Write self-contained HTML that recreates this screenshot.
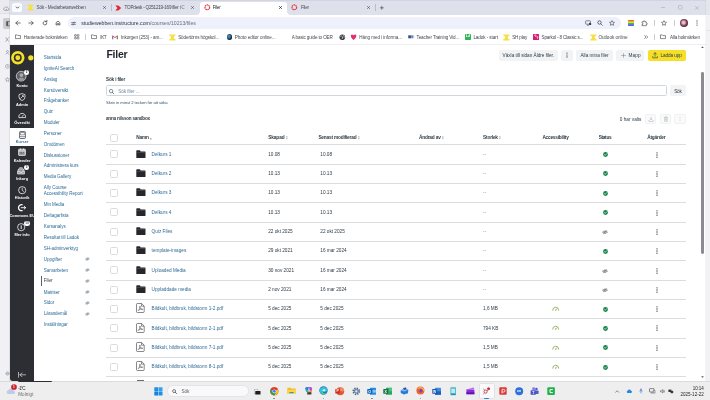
<!DOCTYPE html>
<html lang="sv"><head><meta charset="utf-8"><title>Filer</title>
<style>
*{box-sizing:border-box;margin:0;padding:0}
html,body{width:710px;height:400px;overflow:hidden;background:#eeeeef;font-family:"Liberation Sans",sans-serif;}
#root{position:absolute;left:0;top:0;width:710px;height:400px;overflow:hidden;will-change:transform;filter:blur(0.4px)}
.a{position:absolute;white-space:nowrap;line-height:1;display:block}
svg.a{overflow:visible}
</style></head><body><div id="root">
<!-- nav -->
<div class="a" style="left:0px;top:0px;width:10.4px;height:381px;background:#f1f0f4;"></div>
<div class="a" style="left:0px;top:0px;width:10.4px;height:13.4px;background:#ebebef;"></div>
<div class="a" style="left:0px;top:13px;width:10.4px;height:0.6px;background:#dfdfe3;"></div>
<svg class="a" style="left:3.2px;top:5.8px;" width="6.4" height="5" viewBox="0 0 6.4 5"><path d="M1.5 4.4 A1.3 1.3 0 0 1 1.7 1.9 A1.9 1.9 0 0 1 5.2 2.3 A1.1 1.1 0 0 1 5.2 4.4Z" fill="none" stroke="#77787d" stroke-width="0.55"/><circle cx="3.3" cy="3.2" r="0.5" fill="#77787d"/></svg>
<div class="a" style="left:2.8px;top:18px;width:8.2px;height:10.8px;background:#cdcdd0;border-radius:2px;"></div>
<svg class="a" style="left:5.5px;top:20.7px;" width="5" height="5.4" viewBox="0 0 5 5.4"><rect x="0.4" y="0.5" width="4.6" height="4.4" rx="0.6" fill="none" stroke="#55565b" stroke-width="0.6"/><rect x="0.4" y="0.5" width="1.8" height="4.4" fill="#55565b"/></svg>
<svg class="a" style="left:5.4px;top:36.7px;" width="4.4" height="5" viewBox="0 0 4.4 5"><path d="M0.8 0.6 L3.6 4.4 M3.6 0.6 L0.8 4.4" stroke="#77787d" stroke-width="0.55" stroke-linecap="round"/></svg>
<svg class="a" style="left:5.2px;top:50px;" width="4.8" height="4.8" viewBox="0 0 4.8 4.8"><circle cx="2.4" cy="1.5" r="1" fill="none" stroke="#77787d" stroke-width="0.5"/><path d="M0.6 4.4 Q2.4 1.8 4.2 4.4" fill="none" stroke="#77787d" stroke-width="0.5"/></svg>
<svg class="a" style="left:5.4px;top:63.6px;" width="4.8" height="4.8" viewBox="0 0 4.8 4.8"><circle cx="2.4" cy="2.4" r="1.9" fill="none" stroke="#77787d" stroke-width="0.5"/><path d="M2.4 1.3 V2.5 L3.2 3" fill="none" stroke="#77787d" stroke-width="0.45"/></svg>
<svg class="a" style="left:5.3px;top:76.9px;" width="5" height="5" viewBox="0 0 5 5"><path d="M2.5 0.5 L3.1 1.9 L4.6 2 L3.5 3 L3.8 4.5 L2.5 3.7 L1.2 4.5 L1.5 3 L0.4 2 L1.9 1.9Z" fill="none" stroke="#77787d" stroke-width="0.45" stroke-linejoin="round"/></svg>
<svg class="a" style="left:5.1px;top:371.3px;" width="5" height="5" viewBox="0 0 5 5"><circle cx="2.5" cy="2.5" r="1.6" fill="none" stroke="#77787d" stroke-width="0.9" stroke-dasharray="0.8 0.6"/><circle cx="2.5" cy="2.5" r="0.7" fill="none" stroke="#77787d" stroke-width="0.4"/></svg>
<div class="a" style="left:9.2px;top:0px;width:1px;height:381px;background:linear-gradient(90deg,rgba(120,120,130,0),rgba(120,120,130,0.28));"></div>
<div class="a" style="left:10px;top:44.6px;width:695.6px;height:336.2px;background:#ffffff;"></div>
<div class="a" style="left:10px;top:44.6px;width:24.2px;height:336.2px;background:#2d2e34;border-radius:0 0 0 2.5px;"></div>
<svg class="a" style="left:10.9px;top:50.9px;" width="13.6" height="13.6" viewBox="0 0 13.6 13.6"><circle cx="6.8" cy="6.8" r="6.7" fill="#f6df27"/><circle cx="6.8" cy="6.8" r="3.95" fill="#2d2e34"/><circle cx="6.8" cy="6.8" r="2.45" fill="#f6df27"/></svg>
<svg class="a" style="left:27.6px;top:54.9px;" width="5.6" height="5.6" viewBox="0 0 5.6 5.6"><circle cx="2.8" cy="2.8" r="2.65" fill="#f6df27"/></svg>
<svg class="a" style="left:16px;top:71.4px;" width="10.4" height="10.4" viewBox="0 0 10.4 10.4"><circle cx="5.2" cy="5.2" r="4.9" fill="#5f6166" stroke="#e8e8ea" stroke-width="0.7"/><circle cx="5.4" cy="4.1" r="1.9" fill="#a9abaf"/><path d="M1.8 8.5 Q5.2 4.6 8.7 8.3 Q5.2 10.6 1.8 8.5Z" fill="#96989d"/></svg>
<div class="a" style="left:24.2px;top:70.4px;width:4.6px;height:4.6px;background:#ffffff;border-radius:50%;"><span class="a" style="left:0;top:0.8px;width:4.6px;text-align:center;font-size:3px;font-weight:bold;color:#2d2e34">2</span></div>
<div class="a" style="left:16.47px;top:84px;font-size:3.9px;color:#ffffff;font-weight:bold;">Konto</div>
<svg class="a" style="left:18px;top:93.2px;" width="8" height="8" viewBox="0 0 8 8"><path d="M4 0.6 L7 1.6 V4 Q7 6.6 4 7.6 Q1 6.6 1 4 V1.6Z" fill="none" stroke="#fff" stroke-width="0.7" stroke-linejoin="round"/><path d="M2.6 5.4 L5.2 2.8 M4.4 2.4 L5.8 3.8" stroke="#fff" stroke-width="0.7" stroke-linecap="round"/></svg>
<div class="a" style="left:16.03px;top:103px;font-size:3.9px;color:#ffffff;font-weight:bold;">Admin</div>
<svg class="a" style="left:17.8px;top:112.1px;" width="8.4" height="7" viewBox="0 0 8.4 7"><path d="M0.9 5.6 A3.4 3.4 0 1 1 7.5 5.6 Z" fill="none" stroke="#fff" stroke-width="0.75" stroke-linejoin="round"/><path d="M4.2 4.6 L5.4 3" stroke="#fff" stroke-width="0.7" stroke-linecap="round"/></svg>
<div class="a" style="left:14.3px;top:121px;font-size:3.9px;color:#ffffff;font-weight:bold;">Översikt</div>
<div class="a" style="left:10px;top:127.6px;width:24.2px;height:18.4px;background:#ffffff;"></div>
<svg class="a" style="left:18.5px;top:130.6px;" width="7" height="8" viewBox="0 0 7 8"><rect x="0.6" y="0.5" width="5.8" height="7" rx="0.7" fill="none" stroke="#3a424b" stroke-width="0.75"/><rect x="1.8" y="1.7" width="3.4" height="2.2" fill="none" stroke="#3a424b" stroke-width="0.5"/><path d="M0.6 5.7 H6.4" stroke="#3a424b" stroke-width="0.6"/></svg>
<div class="a" style="left:15.81px;top:140px;font-size:3.9px;color:#3f7196;font-weight:bold;">Kurser</div>
<svg class="a" style="left:18px;top:148.4px;" width="8" height="8" viewBox="0 0 8 8"><rect x="0.6" y="1.2" width="6.8" height="6.2" rx="0.5" fill="rgba(255,255,255,0.55)" stroke="#fff" stroke-width="0.7"/><path d="M0.6 3 H7.4 M2.4 0.4 V1.8 M5.6 0.4 V1.8" stroke="#fff" stroke-width="0.7"/><path d="M1.8 4.4 H6.2 M1.8 5.8 H6.2" stroke="#2d2e34" stroke-width="0.55" stroke-dasharray="0.9 0.6"/></svg>
<div class="a" style="left:13.76px;top:159px;font-size:3.9px;color:#ffffff;font-weight:bold;">Kalender</div>
<svg class="a" style="left:17.4px;top:167.4px;" width="8" height="7.6" viewBox="0 0 8 7.6"><path d="M0.6 4.4 L1.8 1.8 H6.2 L7.4 4.4 V7 H0.6Z" fill="rgba(255,255,255,0.5)" stroke="#fff" stroke-width="0.7" stroke-linejoin="round"/><path d="M0.6 4.4 H2.8 V5.4 H5.2 V4.4 H7.4" fill="none" stroke="#fff" stroke-width="0.6"/><path d="M2.4 0.6 H5.6" stroke="#fff" stroke-width="0.6"/></svg>
<div class="a" style="left:24.4px;top:165.4px;width:4.6px;height:4.6px;background:#ffffff;border-radius:50%;"><span class="a" style="left:0;top:0.8px;width:4.6px;text-align:center;font-size:3px;font-weight:bold;color:#2d2e34">3</span></div>
<div class="a" style="left:16.14px;top:177px;font-size:3.9px;color:#ffffff;font-weight:bold;">Inkorg</div>
<svg class="a" style="left:17.8px;top:185.6px;" width="8.4" height="8.4" viewBox="0 0 8.4 8.4"><circle cx="4.2" cy="4.2" r="3.6" fill="none" stroke="#fff" stroke-width="0.75"/><path d="M4.2 2.2 V4.3 L5.6 5.4" fill="none" stroke="#fff" stroke-width="0.7" stroke-linecap="round"/></svg>
<div class="a" style="left:14.84px;top:196px;font-size:3.9px;color:#ffffff;font-weight:bold;">Historik</div>
<svg class="a" style="left:17.8px;top:204.3px;" width="8.4" height="7.4" viewBox="0 0 8.4 7.4"><path d="M4.6 0.9 A3 3 0 1 0 4.6 6.5" fill="none" stroke="#fff" stroke-width="1.3"/><path d="M3.2 3.7 H7.6 M6.2 2.3 L7.7 3.7 L6.2 5.1" fill="none" stroke="#fff" stroke-width="0.9" stroke-linecap="round" stroke-linejoin="round"/></svg>
<div class="a" style="left:9.52px;top:214px;font-size:3.9px;color:#ffffff;font-weight:bold;clip-path:inset(0 0.88px 0 0.48px);">Commons EU</div>
<svg class="a" style="left:17.2px;top:222.8px;" width="8.4" height="8.4" viewBox="0 0 8.4 8.4"><circle cx="4.2" cy="4.2" r="3.6" fill="none" stroke="#fff" stroke-width="0.75"/><path d="M4.2 2.4 V6" stroke="#fff" stroke-width="0.9"/><circle cx="4.2" cy="1.9" r="0.1" fill="#fff"/></svg>
<div class="a" style="left:23.6px;top:221.2px;width:6.8px;height:4.6px;background:#ffffff;border-radius:2.3px;"><span class="a" style="left:0;top:0.8px;width:6.8px;text-align:center;font-size:3px;font-weight:bold;color:#2d2e34">10</span></div>
<div class="a" style="left:14.52px;top:233px;font-size:3.9px;color:#ffffff;font-weight:bold;">Mer info</div>
<svg class="a" style="left:18.2px;top:371.5px;" width="8" height="5.6" viewBox="0 0 8 5.6"><path d="M0.5 0.4 V5.2 M2 2.8 H7.5 M3.9 0.9 L2 2.8 L3.9 4.7" fill="none" stroke="#fff" stroke-width="0.6" stroke-linecap="round" stroke-linejoin="round"/></svg>
<div class="a" style="left:43.7px;top:56px;font-size:4.55px;color:#2d6d99;letter-spacing:-0.03px;">Startsida</div>
<div class="a" style="left:43.7px;top:67px;font-size:4.55px;color:#2d6d99;letter-spacing:-0.03px;">IgniteAI Search</div>
<div class="a" style="left:43.7px;top:78px;font-size:4.55px;color:#2d6d99;letter-spacing:-0.04px;">Anslag</div>
<div class="a" style="left:43.7px;top:89px;font-size:4.55px;color:#2d6d99;letter-spacing:-0.03px;">Kursöversikt</div>
<div class="a" style="left:43.7px;top:99px;font-size:4.55px;color:#2d6d99;letter-spacing:-0.04px;">Frågebanker</div>
<div class="a" style="left:43.7px;top:110px;font-size:4.55px;color:#2d6d99;letter-spacing:-0.05px;">Quiz</div>
<div class="a" style="left:43.7px;top:121px;font-size:4.55px;color:#2d6d99;letter-spacing:-0.04px;">Moduler</div>
<div class="a" style="left:43.7px;top:132px;font-size:4.55px;color:#2d6d99;letter-spacing:-0.04px;">Personer</div>
<div class="a" style="left:43.7px;top:143px;font-size:4.55px;color:#2d6d99;letter-spacing:-0.05px;">Omdömen</div>
<div class="a" style="left:43.7px;top:154px;font-size:4.55px;color:#2d6d99;letter-spacing:-0.04px;">Diskussioner</div>
<div class="a" style="left:43.7px;top:164px;font-size:4.55px;color:#2d6d99;letter-spacing:-0.03px;">Administrera kurs</div>
<div class="a" style="left:43.7px;top:175px;font-size:4.55px;color:#2d6d99;letter-spacing:-0.04px;">Media Gallery</div>
<div class="a" style="left:43.7px;top:186px;font-size:4.55px;color:#2d6d99;letter-spacing:-0.03px;">Ally Course</div>
<div class="a" style="left:43.7px;top:192px;font-size:4.55px;color:#2d6d99;letter-spacing:-0.03px;">Accessibility Report</div>
<div class="a" style="left:43.7px;top:203px;font-size:4.55px;color:#2d6d99;letter-spacing:-0.04px;">Min Media</div>
<div class="a" style="left:43.7px;top:214px;font-size:4.55px;color:#2d6d99;letter-spacing:-0.03px;">Deltagarlista</div>
<div class="a" style="left:43.7px;top:225px;font-size:4.55px;color:#2d6d99;letter-spacing:-0.04px;">Kursanalys</div>
<div class="a" style="left:43.7px;top:236px;font-size:4.55px;color:#2d6d99;letter-spacing:-0.03px;">Resultat till Ladok</div>
<div class="a" style="left:43.7px;top:247px;font-size:4.55px;color:#2d6d99;letter-spacing:-0.04px;">SH-adminverktyg</div>
<div class="a" style="left:43.7px;top:258px;font-size:4.55px;color:#2d6d99;letter-spacing:-0.03px;">Uppgifter</div>
<svg class="a" style="left:85.1px;top:257px;" width="4.8" height="4" viewBox="0 0 4.8 4"><path d="M0.4 2 Q2.4 -0.3 4.4 2 Q2.4 4.3 0.4 2Z" fill="none" stroke="#66727c" stroke-width="0.42"/><circle cx="2.4" cy="2" r="0.7" fill="none" stroke="#66727c" stroke-width="0.38"/><path d="M4 0.3 L0.9 3.8" stroke="#66727c" stroke-width="0.42"/></svg>
<div class="a" style="left:43.7px;top:269px;font-size:4.55px;color:#2d6d99;letter-spacing:-0.04px;">Samarbeten</div>
<svg class="a" style="left:85.1px;top:267.8px;" width="4.8" height="4" viewBox="0 0 4.8 4"><path d="M0.4 2 Q2.4 -0.3 4.4 2 Q2.4 4.3 0.4 2Z" fill="none" stroke="#66727c" stroke-width="0.42"/><circle cx="2.4" cy="2" r="0.7" fill="none" stroke="#66727c" stroke-width="0.38"/><path d="M4 0.3 L0.9 3.8" stroke="#66727c" stroke-width="0.42"/></svg>
<div class="a" style="left:43.7px;top:279px;font-size:4.55px;color:#2d3b45;letter-spacing:-0.03px;">Filer</div>
<svg class="a" style="left:85.1px;top:278.6px;" width="4.8" height="4" viewBox="0 0 4.8 4"><path d="M0.4 2 Q2.4 -0.3 4.4 2 Q2.4 4.3 0.4 2Z" fill="none" stroke="#66727c" stroke-width="0.42"/><circle cx="2.4" cy="2" r="0.7" fill="none" stroke="#66727c" stroke-width="0.38"/><path d="M4 0.3 L0.9 3.8" stroke="#66727c" stroke-width="0.42"/></svg>
<div class="a" style="left:43.7px;top:291px;font-size:4.55px;color:#2d6d99;letter-spacing:-0.04px;">Matriser</div>
<svg class="a" style="left:85.1px;top:289.8px;" width="4.8" height="4" viewBox="0 0 4.8 4"><path d="M0.4 2 Q2.4 -0.3 4.4 2 Q2.4 4.3 0.4 2Z" fill="none" stroke="#66727c" stroke-width="0.42"/><circle cx="2.4" cy="2" r="0.7" fill="none" stroke="#66727c" stroke-width="0.38"/><path d="M4 0.3 L0.9 3.8" stroke="#66727c" stroke-width="0.42"/></svg>
<div class="a" style="left:43.7px;top:301px;font-size:4.55px;color:#2d6d99;letter-spacing:-0.04px;">Sidor</div>
<svg class="a" style="left:85.1px;top:300.6px;" width="4.8" height="4" viewBox="0 0 4.8 4"><path d="M0.4 2 Q2.4 -0.3 4.4 2 Q2.4 4.3 0.4 2Z" fill="none" stroke="#66727c" stroke-width="0.42"/><circle cx="2.4" cy="2" r="0.7" fill="none" stroke="#66727c" stroke-width="0.38"/><path d="M4 0.3 L0.9 3.8" stroke="#66727c" stroke-width="0.42"/></svg>
<div class="a" style="left:43.7px;top:312px;font-size:4.55px;color:#2d6d99;letter-spacing:-0.04px;">Lärandemål</div>
<svg class="a" style="left:85.1px;top:311.6px;" width="4.8" height="4" viewBox="0 0 4.8 4"><path d="M0.4 2 Q2.4 -0.3 4.4 2 Q2.4 4.3 0.4 2Z" fill="none" stroke="#66727c" stroke-width="0.42"/><circle cx="2.4" cy="2" r="0.7" fill="none" stroke="#66727c" stroke-width="0.38"/><path d="M4 0.3 L0.9 3.8" stroke="#66727c" stroke-width="0.42"/></svg>
<div class="a" style="left:43.7px;top:323px;font-size:4.55px;color:#2d6d99;letter-spacing:-0.03px;">Inställningar</div>
<div class="a" style="left:41px;top:276px;width:1px;height:10px;background:#56616b;"></div>
<!-- chrome -->
<div class="a" style="left:10px;top:0px;width:695.6px;height:14.7px;background:#dee1ec;border-radius:1.5px 1.5px 0 0;"></div>
<div class="a" style="left:10px;top:0px;width:695.6px;height:0.7px;background:#d2d5e0;border-radius:1.5px 1.5px 0 0;"></div>
<div class="a" style="left:11.8px;top:2.5px;width:10.2px;height:9.5px;background:#fafbfe;border-radius:2.6px;"></div>
<svg class="a" style="left:14.5px;top:5.1px;" width="5" height="5" viewBox="0 0 5 5"><path d="M1.2 1.9 L2.5 3.2 L3.8 1.9" fill="none" stroke="#30323a" stroke-width="0.8" stroke-linecap="round" stroke-linejoin="round"/></svg>
<svg class="a" style="left:26.7px;top:4.2px;" width="6.8" height="6.8" viewBox="0 0 6.8 6.8"><path d="M0.2 0.4 H6.6 V1.6 A1.75 1.75 0 0 0 6.6 5.2 V6.4 H0.2 V5.2 A1.75 1.75 0 0 0 0.2 1.6Z" fill="#f5e04a"/></svg>
<div class="a" style="left:36.5px;top:6px;font-size:4.6px;color:#47494f;letter-spacing:-0.11px;">Sök - Medarbetarwebben</div>
<svg class="a" style="left:103px;top:6.1px;" width="3" height="3" viewBox="0 0 3 3"><path d="M0.4 0.4 L2.6 2.6 M2.6 0.4 L0.4 2.6" stroke="#3a3c40" stroke-width="0.55" stroke-linecap="round"/></svg>
<div class="a" style="left:111.1px;top:4.4px;width:0.5px;height:6.4px;background:#b9bdc9;"></div>
<svg class="a" style="left:114.8px;top:4.6px;" width="6.4" height="6" viewBox="0 0 6.4 6"><path d="M0.3 0.4 L3.4 0.4 L6.1 3 L3.4 5.6 L0.3 5.6 L2.6 3Z" fill="#e0262d"/></svg>
<div class="a" style="left:124.6px;top:6px;font-size:4.6px;color:#47494f;letter-spacing:-0.22px;">TOPdesk - Q251219-169 filer i C</div>
<div class="a" style="left:181px;top:3px;width:6px;height:9px;background:linear-gradient(90deg,rgba(222,225,236,0),#dee1ec);"></div>
<svg class="a" style="left:190.8px;top:6.1px;" width="3" height="3" viewBox="0 0 3 3"><path d="M0.4 0.4 L2.6 2.6 M2.6 0.4 L0.4 2.6" stroke="#3a3c40" stroke-width="0.55" stroke-linecap="round"/></svg>
<div class="a" style="left:200.2px;top:1.8px;width:87px;height:12.9px;background:#ffffff;border-radius:3px 3px 0 0;"></div>
<div class="a" style="left:197.4px;top:11.9px;width:2.9px;height:2.8px;background:radial-gradient(circle at 0 0, rgba(255,255,255,0) 2.8px, #fff 2.9px);"></div>
<div class="a" style="left:287.1px;top:11.9px;width:2.9px;height:2.8px;background:radial-gradient(circle at 100% 0, rgba(255,255,255,0) 2.8px, #fff 2.9px);"></div>
<svg class="a" style="left:203.5px;top:4.4px;" width="6.6" height="6.6" viewBox="0 0 6.6 6.6"><circle cx="3.3" cy="3.3" r="2.35" fill="none" stroke="#e0383e" stroke-width="1.15" stroke-dasharray="1.45 0.4"/></svg>
<div class="a" style="left:212.7px;top:6px;font-size:4.6px;color:#2a2c30;letter-spacing:-0.24px;">Filer</div>
<svg class="a" style="left:279.2px;top:6.1px;" width="3" height="3" viewBox="0 0 3 3"><path d="M0.4 0.4 L2.6 2.6 M2.6 0.4 L0.4 2.6" stroke="#1f2024" stroke-width="0.7" stroke-linecap="round"/></svg>
<svg class="a" style="left:291.4px;top:4.4px;" width="6.6" height="6.6" viewBox="0 0 6.6 6.6"><circle cx="3.3" cy="3.3" r="2.35" fill="none" stroke="#e0383e" stroke-width="1.15" stroke-dasharray="1.45 0.4"/></svg>
<div class="a" style="left:301px;top:6px;font-size:4.6px;color:#47494f;letter-spacing:-0.24px;">Filer</div>
<svg class="a" style="left:367.3px;top:6.1px;" width="3" height="3" viewBox="0 0 3 3"><path d="M0.4 0.4 L2.6 2.6 M2.6 0.4 L0.4 2.6" stroke="#3a3c40" stroke-width="0.55" stroke-linecap="round"/></svg>
<div class="a" style="left:375.4px;top:4.4px;width:0.5px;height:6.4px;background:#b9bdc9;"></div>
<svg class="a" style="left:380.2px;top:5.8px;" width="3.6" height="3.6" viewBox="0 0 3.6 3.6"><path d="M1.8 0.3 V3.3 M0.3 1.8 H3.3" stroke="#30323a" stroke-width="0.6" stroke-linecap="round"/></svg>
<svg class="a" style="left:661px;top:7.1px;" width="4" height="1" viewBox="0 0 4 1"><path d="M0.1 0.5 H3.9" stroke="#9da0a9" stroke-width="0.5"/></svg>
<svg class="a" style="left:677.7px;top:5.2px;" width="4.6" height="4.6" viewBox="0 0 4.6 4.6"><rect x="0.5" y="0.5" width="3.6" height="3.6" rx="0.6" fill="none" stroke="#9da0a9" stroke-width="0.5"/></svg>
<svg class="a" style="left:695.05px;top:5.55px;" width="3.9" height="3.9" viewBox="0 0 3.9 3.9"><path d="M0.4 0.4 L3.5 3.5 M3.5 0.4 L0.4 3.5" stroke="#9da0a9" stroke-width="0.5" stroke-linecap="round"/></svg>
<div class="a" style="left:10px;top:14.7px;width:695.6px;height:15.6px;background:#ffffff;"></div>
<svg class="a" style="left:14.5px;top:20.3px;" width="6" height="6" viewBox="0 0 6 6"><path d="M5.2 3 H0.9 M2.8 1 L0.8 3 L2.8 5" fill="none" stroke="#3f4146" stroke-width="0.75" stroke-linecap="round" stroke-linejoin="round"/></svg>
<svg class="a" style="left:28px;top:20.3px;" width="6" height="6" viewBox="0 0 6 6"><path d="M0.8 3 H5.1 M3.2 1 L5.2 3 L3.2 5" fill="none" stroke="#3f4146" stroke-width="0.75" stroke-linecap="round" stroke-linejoin="round"/></svg>
<svg class="a" style="left:41.5px;top:20.3px;" width="6" height="6" viewBox="0 0 6 6"><path d="M4.9 3 A1.9 1.9 0 1 1 4.3 1.6" fill="none" stroke="#3f4146" stroke-width="0.75" stroke-linecap="round"/><path d="M3.4 1.7 H4.9 V0.3" fill="none" stroke="#3f4146" stroke-width="0.75" stroke-linecap="round" stroke-linejoin="round"/></svg>
<svg class="a" style="left:54.8px;top:20.3px;" width="6" height="6" viewBox="0 0 6 6"><path d="M1.1 2.7 L3 1.1 L4.9 2.7 V5 H3.7 V3.6 H2.3 V5 H1.1Z" fill="none" stroke="#3f4146" stroke-width="0.75" stroke-linejoin="round"/></svg>
<div class="a" style="left:68px;top:17.4px;width:552.8px;height:11.6px;background:#eef0fb;border-radius:5.8px;"></div>
<svg class="a" style="left:71px;top:20.7px;" width="5" height="5" viewBox="0 0 5 5"><path d="M0.6 1.6 H2.6 M3.9 1.6 H4.4 M0.6 3.4 H1.1 M2.4 3.4 H4.4" stroke="#3f4146" stroke-width="0.6" stroke-linecap="round"/><circle cx="3.2" cy="1.6" r="0.65" fill="none" stroke="#3f4146" stroke-width="0.5"/><circle cx="1.8" cy="3.4" r="0.65" fill="none" stroke="#3f4146" stroke-width="0.5"/></svg>
<div class="a" style="left:81.2px;top:21px;font-size:5.18px;color:#34363b;">studiewebben.instructure.com</div>
<div class="a" style="left:149.96px;top:21px;font-size:5.18px;color:#6b6e76;">/courses/10213/files</div>
<svg class="a" style="left:584.8px;top:20.3px;" width="6.4" height="6" viewBox="0 0 6.4 6"><rect x="0.6" y="0.8" width="4.8" height="3.4" rx="0.6" fill="none" stroke="#3f4146" stroke-width="0.6"/><path d="M2 5.3 H4" stroke="#3f4146" stroke-width="0.6"/><circle cx="5.1" cy="3.9" r="1.2" fill="#3f4146"/></svg>
<svg class="a" style="left:597.3px;top:20.3px;" width="6" height="6" viewBox="0 0 6 6"><circle cx="2.5" cy="2.5" r="1.7" fill="none" stroke="#3f4146" stroke-width="0.75"/><path d="M3.8 3.8 L5.3 5.3" stroke="#3f4146" stroke-width="0.7" stroke-linecap="round"/></svg>
<svg class="a" style="left:609.2px;top:20.2px;" width="6" height="6" viewBox="0 0 6 6"><path d="M3 0.6 L3.75 2.2 L5.5 2.4 L4.2 3.6 L4.55 5.3 L3 4.45 L1.45 5.3 L1.8 3.6 L0.5 2.4 L2.25 2.2Z" fill="none" stroke="#3f4146" stroke-width="0.6" stroke-linejoin="round"/></svg>
<div class="a" style="left:627.6px;top:20px;width:6.4px;height:6.4px;background:linear-gradient(180deg,#e8433a 0%,#f39b1f 22%,#f4e02a 40%,#3fbf4a 58%,#2b8de8 76%,#8a3fd6 100%);border-radius:0.8px;"></div>
<svg class="a" style="left:641.2px;top:20.1px;" width="6.4" height="6.4" viewBox="0 0 6.4 6.4"><path d="M1 1.8 H2.4 A0.8 0.8 0 1 1 3.9 1.8 H5.2 V3.1 A0.8 0.8 0 1 1 5.2 4.6 V5.7 H1 V4.5 A0.75 0.75 0 1 0 1 3.1Z" fill="none" stroke="#3f4146" stroke-width="0.6" stroke-linejoin="round"/></svg>
<div class="a" style="left:654.1px;top:20.4px;width:0.5px;height:5.8px;background:#c9ccd6;"></div>
<svg class="a" style="left:661px;top:20.2px;" width="6" height="6" viewBox="0 0 6 6"><path d="M3 0.6 L3.75 2.2 L5.5 2.4 L4.2 3.6 L4.55 5.3 L3 4.45 L1.45 5.3 L1.8 3.6 L0.5 2.4 L2.25 2.2Z" fill="none" stroke="#3f4146" stroke-width="0.6" stroke-linejoin="round"/><path d="M0.5 5.6 H5.5" stroke="#3f4146" stroke-width="0"/></svg>
<div class="a" style="left:673.8px;top:20.4px;width:0.5px;height:5.8px;background:#c9ccd6;"></div>
<div class="a" style="left:680px;top:19.2px;width:8px;height:8px;background:radial-gradient(circle at 45% 45%, #e9b9c7 0 22%, #8e4a63 45%, #3a2430 75%);border-radius:50%;"></div>
<svg class="a" style="left:696.4px;top:20.3px;" width="2" height="6" viewBox="0 0 2 6"><circle cx="1" cy="0.9" r="0.62" fill="#3f4146"/><circle cx="1" cy="3" r="0.62" fill="#3f4146"/><circle cx="1" cy="5.1" r="0.62" fill="#3f4146"/></svg>
<div class="a" style="left:10px;top:30.3px;width:695.6px;height:14.3px;background:#ffffff;border-bottom:1px solid #efeff3;"></div>
<svg class="a" style="left:14.5px;top:34.2px;" width="6" height="5.4" viewBox="0 0 6 5.4"><path d="M0.5 0.9 H2.3 L2.9 1.6 H5.5 V4.6 H0.5Z" fill="none" stroke="#3f4146" stroke-width="0.6" stroke-linejoin="round"/></svg>
<div class="a" style="left:23.8px;top:36px;font-size:4.6px;color:#47494f;letter-spacing:-0.1px;">Hanterade bokmärken</div>
<svg class="a" style="left:74px;top:34.1px;" width="5.6" height="5.6" viewBox="0 0 5.6 5.6"><rect x="0.6" y="0.6" width="1.7" height="1.7" rx="0.3" fill="none" stroke="#3f4146" stroke-width="0.55"/><rect x="0.6" y="3.3" width="1.7" height="1.7" rx="0.3" fill="none" stroke="#3f4146" stroke-width="0.55"/><rect x="3.3" y="0.6" width="1.7" height="1.7" rx="0.3" fill="none" stroke="#3f4146" stroke-width="0.55"/><rect x="3.3" y="3.3" width="1.7" height="1.7" rx="0.3" fill="none" stroke="#3f4146" stroke-width="0.55"/></svg>
<div class="a" style="left:85.3px;top:33.8px;width:0.5px;height:6.2px;background:#c9ccd6;"></div>
<svg class="a" style="left:91.3px;top:34.2px;" width="6" height="5.4" viewBox="0 0 6 5.4"><path d="M0.5 0.9 H2.3 L2.9 1.6 H5.5 V4.6 H0.5Z" fill="none" stroke="#3f4146" stroke-width="0.6" stroke-linejoin="round"/></svg>
<div class="a" style="left:100.3px;top:36px;font-size:4.6px;color:#47494f;letter-spacing:-0.43px;">IKT</div>
<svg class="a" style="left:112.3px;top:34.6px;" width="6" height="4.6" viewBox="0 0 6 4.6"><path d="M0.7 4.2 V0.8 L3 2.6 L5.3 0.8 V4.2" fill="none" stroke="#ea4335" stroke-width="0.9" stroke-linejoin="round"/><path d="M0.7 4.2 V1" stroke="#4285f4" stroke-width="0.9"/><path d="M5.3 4.2 V1" stroke="#34a853" stroke-width="0.9"/></svg>
<div class="a" style="left:120.9px;top:36px;font-size:4.6px;color:#47494f;letter-spacing:-0.11px;">Inkorgen (253) - am...</div>
<svg class="a" style="left:169.2px;top:33.5px;" width="6.8" height="6.8" viewBox="0 0 6.8 6.8"><path d="M0.2 0.4 H6.6 V1.6 A1.75 1.75 0 0 0 6.6 5.2 V6.4 H0.2 V5.2 A1.75 1.75 0 0 0 0.2 1.6Z" fill="#f5e04a"/></svg>
<div class="a" style="left:178.2px;top:36px;font-size:4.6px;color:#47494f;letter-spacing:-0.13px;">Södertörns högskol...</div>
<div class="a" style="left:226.6px;top:34.1px;width:5.6px;height:5.6px;background:radial-gradient(circle at 40% 40%,#3f7fb0 0 25%,#15283a 60%);border-radius:50%;"></div>
<div class="a" style="left:234.8px;top:36px;font-size:4.6px;color:#47494f;letter-spacing:-0.07px;">Photo editor online...</div>
<div class="a" style="left:291.8px;top:36px;font-size:4.6px;color:#47494f;letter-spacing:-0.14px;">A basic guide to OER</div>
<svg class="a" style="left:338.7px;top:33.6px;" width="6.6" height="6.6" viewBox="0 0 5.6 5.6"><circle cx="2.8" cy="2.8" r="2.4" fill="#3c3e44"/><path d="M1 2 Q2.2 1.2 3 2.4 Q3.4 3.4 2.4 4.4 M3.6 1 Q4.6 1.8 4.4 3.2" fill="none" stroke="#fff" stroke-width="0.5"/></svg>
<svg class="a" style="left:350.4px;top:33.8px;" width="7.2" height="6.4" viewBox="0 0 6 5.4"><path d="M3 5 C0.2 3 0.2 0.6 1.7 0.5 C2.5 0.5 3 1.3 3 1.3 C3 1.3 3.5 0.5 4.3 0.5 C5.8 0.6 5.8 3 3 5Z" fill="#e02f6b"/></svg>
<div class="a" style="left:359.2px;top:36px;font-size:4.6px;color:#47494f;letter-spacing:-0.06px;">Häng med i informa...</div>
<svg class="a" style="left:407.8px;top:35.1px;" width="6.4" height="3.6" viewBox="0 0 6.4 3.6"><rect x="0.2" y="0.3" width="3.4" height="3" fill="#38568a"/><rect x="3.9" y="0.3" width="1.1" height="3" fill="#6b8cc2"/><rect x="5.3" y="0.3" width="0.9" height="3" fill="#9db7dd"/></svg>
<div class="a" style="left:416.5px;top:36px;font-size:4.6px;color:#47494f;letter-spacing:-0.14px;">Teacher Training Vid...</div>
<div class="a" style="left:465.1px;top:34px;width:5.9px;height:5.9px;background:#2fb457;border-radius:0.8px;"><span class="a" style="left:0;top:0.8px;width:5.9px;text-align:center;font-size:3.6px;font-weight:bold;color:#fff">Ld</span></div>
<div class="a" style="left:473.4px;top:36px;font-size:4.6px;color:#47494f;letter-spacing:-0.08px;">Ladok - start</div>
<svg class="a" style="left:503.4px;top:33.5px;" width="6.8" height="6.8" viewBox="0 0 6.8 6.8"><path d="M0.2 0.4 H6.6 V1.6 A1.75 1.75 0 0 0 6.6 5.2 V6.4 H0.2 V5.2 A1.75 1.75 0 0 0 0.2 1.6Z" fill="#f5e04a"/></svg>
<div class="a" style="left:512.2px;top:36px;font-size:4.6px;color:#47494f;letter-spacing:-0.18px;">SH play</div>
<div class="a" style="left:533px;top:34px;width:6px;height:5.9px;background:#d81b72;border-radius:0.5px;"><svg class="a" style="left:0;top:0" width="6" height="5.9" viewBox="0 0 6 5.9"><path d="M1 1.4 L3 0.8 L2.6 3 M3.4 3 L5 2.6 L4.4 5" fill="none" stroke="#fff" stroke-width="0.6"/></svg></div>
<div class="a" style="left:541.6px;top:36px;font-size:4.6px;color:#47494f;letter-spacing:-0.18px;">Sparkol - 8 Classic s...</div>
<svg class="a" style="left:589.6px;top:33.5px;" width="6.8" height="6.8" viewBox="0 0 6.8 6.8"><path d="M0.2 0.4 H6.6 V1.6 A1.75 1.75 0 0 0 6.6 5.2 V6.4 H0.2 V5.2 A1.75 1.75 0 0 0 0.2 1.6Z" fill="#f5e04a"/></svg>
<div class="a" style="left:598.5px;top:36px;font-size:4.6px;color:#47494f;letter-spacing:-0.02px;">Outlook online</div>
<svg class="a" style="left:643.6px;top:34.9px;" width="4.4" height="4" viewBox="0 0 4.4 4"><path d="M0.6 0.6 L2 2 L0.6 3.4 M2.4 0.6 L3.8 2 L2.4 3.4" fill="none" stroke="#3f4146" stroke-width="0.55" stroke-linecap="round" stroke-linejoin="round"/></svg>
<div class="a" style="left:654.1px;top:33.8px;width:0.5px;height:6.2px;background:#c9ccd6;"></div>
<svg class="a" style="left:660.4px;top:34.2px;" width="6" height="5.4" viewBox="0 0 6 5.4"><path d="M0.5 0.9 H2.3 L2.9 1.6 H5.5 V4.6 H0.5Z" fill="none" stroke="#3f4146" stroke-width="0.6" stroke-linejoin="round"/></svg>
<div class="a" style="left:669.9px;top:36px;font-size:4.6px;color:#47494f;letter-spacing:-0.12px;">Alla bokmärken</div>
<!-- main -->
<div class="a" style="left:106.4px;top:49px;font-size:10.5px;color:#22282d;font-weight:bold;letter-spacing:-0.24px;">Filer</div>
<div class="a" style="left:498.5px;top:49.6px;width:59.5px;height:11px;background:#f2f3f5;border-radius:1.8px;"></div><div class="a" style="left:502.6px;top:54px;font-size:4.7px;color:#2d3b45;letter-spacing:-0.02px;">Växla till sidan Äldre filer.</div>
<div class="a" style="left:561.4px;top:49.6px;width:11.6px;height:11px;background:#f2f3f5;border-radius:1.8px;"></div><svg class="a" style="left:566.2px;top:52.1px;" width="2" height="6" viewBox="0 0 2 6"><circle cx="1" cy="1.05" r="0.62" fill="#2d3b45"/><circle cx="1" cy="3" r="0.62" fill="#2d3b45"/><circle cx="1" cy="4.95" r="0.62" fill="#2d3b45"/></svg>
<div class="a" style="left:576.4px;top:49.6px;width:36.2px;height:11px;background:#f2f3f5;border-radius:1.8px;"></div><div class="a" style="left:580.4px;top:54px;font-size:4.7px;color:#2d3b45;letter-spacing:0.01px;">Alla mina filer</div>
<div class="a" style="left:616.3px;top:49.6px;width:28.1px;height:11px;background:#f2f3f5;border-radius:1.8px;"></div><div class="a" style="left:628.6px;top:54px;font-size:4.7px;color:#2d3b45;letter-spacing:0.11px;">Mapp</div>
<svg class="a" style="left:620.7px;top:52.6px;" width="5" height="5" viewBox="0 0 5 5"><path d="M2.5 0.2 V4.8 M0.2 2.5 H4.8" stroke="#55626e" stroke-width="0.42"/></svg>
<div class="a" style="left:648.1px;top:49.6px;width:37.9px;height:11px;background:#f6df27;border-radius:1.8px;"></div><div class="a" style="left:660.4px;top:54px;font-size:4.7px;color:#2d3b45;letter-spacing:-0.08px;">Ladda upp</div>
<svg class="a" style="left:651.6px;top:51.7px;" width="6.2" height="6.6" viewBox="0 0 5 5.4"><path d="M2.5 3.6 V0.7 M1.3 1.8 L2.5 0.6 L3.7 1.8" fill="none" stroke="#2d3b45" stroke-width="0.5" stroke-linecap="round" stroke-linejoin="round"/><path d="M0.6 3.4 V4.8 H4.4 V3.4" fill="none" stroke="#2d3b45" stroke-width="0.5" stroke-linejoin="round"/></svg>
<div class="a" style="left:106px;top:78px;font-size:4.6px;color:#2d3b45;font-weight:bold;letter-spacing:-0.14px;">Sök i filer</div>
<div class="a" style="left:105.6px;top:85.3px;width:561px;height:11.2px;background:#ffffff;border:1px solid #d2d6da;border-radius:1.5px;"></div>
<svg class="a" style="left:109.2px;top:88.5px;" width="5" height="5" viewBox="0 0 5 5"><circle cx="2.1" cy="2.1" r="1.7" fill="none" stroke="#2d3b45" stroke-width="0.55"/><path d="M3.35 3.35 L4.8 4.8" stroke="#2d3b45" stroke-width="0.6" stroke-linecap="round"/></svg>
<div class="a" style="left:118.3px;top:90px;font-size:4.7px;color:#6e8aa3;letter-spacing:-0.08px;">Sök filer ...</div>
<div class="a" style="left:670.2px;top:85.3px;width:15.6px;height:11.2px;background:#f2f3f5;border-radius:1.8px;"></div>
<div class="a" style="left:674.2px;top:90px;font-size:4.7px;color:#2d3b45;letter-spacing:-0.2px;">Sök</div>
<div class="a" style="left:106px;top:101px;font-size:4.2px;color:#35506c;letter-spacing:-0.06px;">Skriv in minst 2 tecken för att söka</div>
<div class="a" style="left:106px;top:117px;font-size:4.6px;color:#2d3b45;font-weight:bold;letter-spacing:-0.22px;">anna nilsson sandbox</div>
<div class="a" style="left:619.8px;top:118px;font-size:4.7px;color:#2d3b45;">0 har valts</div>
<div class="a" style="left:644.9px;top:113.5px;width:11.2px;height:10.6px;background:#fafafb;border:1px solid #f0f1f3;border-radius:1.6px;"></div>
<div class="a" style="left:659.9px;top:113.5px;width:11.2px;height:10.6px;background:#fafafb;border:1px solid #f0f1f3;border-radius:1.6px;"></div>
<div class="a" style="left:674.4px;top:113.5px;width:11.2px;height:10.6px;background:#fafafb;border:1px solid #f0f1f3;border-radius:1.6px;"></div>
<svg class="a" style="left:647.5px;top:115.8px;" width="6" height="6" viewBox="0 0 5 5"><path d="M2.5 0.6 V3.2 M1.4 2.2 L2.5 3.3 L3.6 2.2" fill="none" stroke="#a9b0b6" stroke-width="0.45"/><path d="M0.7 3.4 V4.5 H4.3 V3.4" fill="none" stroke="#a9b0b6" stroke-width="0.45"/></svg>
<svg class="a" style="left:662.5px;top:115.8px;" width="6" height="6" viewBox="0 0 5 5"><path d="M0.8 1.3 H4.2 M1.3 1.3 V4.5 H3.7 V1.3 M1.9 1.2 V0.6 H3.1 V1.2 M2.1 2 V3.8 M2.9 2 V3.8" fill="none" stroke="#a9b0b6" stroke-width="0.4"/></svg>
<svg class="a" style="left:679px;top:115.8px;" width="2" height="6" viewBox="0 0 2 6"><circle cx="1" cy="1.1" r="0.45" fill="#a9b0b6"/><circle cx="1" cy="3" r="0.45" fill="#a9b0b6"/><circle cx="1" cy="4.9" r="0.45" fill="#a9b0b6"/></svg>
<div class="a" style="left:109.9px;top:133.9px;width:8.2px;height:8.2px;background:#ffffff;border:1px solid #dadcdf;border-radius:1.6px;"></div>
<div class="a" style="left:136.3px;top:136px;font-size:4.75px;color:#2d3b45;font-weight:bold;letter-spacing:-0.17px;">Namn</div><svg class="a" style="left:150.1px;top:137.6px;" width="1.8" height="1.4" viewBox="0 0 1.8 1.4"><path d="M0.9 0.1 L1.7 1.3 H0.1Z" fill="#2d3b45"/></svg>
<div class="a" style="left:268.2px;top:136px;font-size:4.75px;color:#2d3b45;font-weight:bold;letter-spacing:-0.1px;">Skapad</div><svg class="a" style="left:285.6px;top:136.1px;" width="1.8" height="3.6" viewBox="0 0 1.8 3.6"><path d="M0.9 0.3 L1.6 1.2 H0.2Z M0.9 3.3 L1.6 2.4 H0.2Z" fill="#2d3b45"/></svg>
<div class="a" style="left:318.4px;top:136px;font-size:4.75px;color:#2d3b45;font-weight:bold;letter-spacing:-0.19px;">Senast modifierad</div><svg class="a" style="left:357.5px;top:136.1px;" width="1.8" height="3.6" viewBox="0 0 1.8 3.6"><path d="M0.9 0.3 L1.6 1.2 H0.2Z M0.9 3.3 L1.6 2.4 H0.2Z" fill="#2d3b45"/></svg>
<div class="a" style="left:418.9px;top:136px;font-size:4.75px;color:#2d3b45;font-weight:bold;letter-spacing:-0.15px;">Ändrad av</div><svg class="a" style="left:441.9px;top:136.1px;" width="1.8" height="3.6" viewBox="0 0 1.8 3.6"><path d="M0.9 0.3 L1.6 1.2 H0.2Z M0.9 3.3 L1.6 2.4 H0.2Z" fill="#2d3b45"/></svg>
<div class="a" style="left:483.1px;top:136px;font-size:4.75px;color:#2d3b45;font-weight:bold;letter-spacing:-0.2px;">Storlek</div><svg class="a" style="left:499px;top:136.1px;" width="1.8" height="3.6" viewBox="0 0 1.8 3.6"><path d="M0.9 0.3 L1.6 1.2 H0.2Z M0.9 3.3 L1.6 2.4 H0.2Z" fill="#2d3b45"/></svg>
<div class="a" style="left:542.4px;top:136px;font-size:4.75px;color:#2d3b45;font-weight:bold;letter-spacing:-0.22px;">Accessibility</div>
<div class="a" style="left:598.7px;top:136px;font-size:4.75px;color:#2d3b45;font-weight:bold;letter-spacing:-0.32px;">Status</div>
<div class="a" style="left:647.2px;top:136px;font-size:4.75px;color:#2d3b45;font-weight:bold;letter-spacing:-0.19px;">Åtgärder</div>
<div class="a" style="left:106px;top:144.35px;width:579.6px;height:1px;background:#dcdddf;"></div>
<div class="a" style="left:109.9px;top:150.21px;width:8.2px;height:8.2px;background:#ffffff;border:1px solid #dadcdf;border-radius:1.6px;"></div>
<svg class="a" style="left:135.8px;top:149.51px;" width="9.8" height="8.4" viewBox="0 0 9.8 8.4"><path d="M0.3 0.9 Q0.3 0.3 0.9 0.3 H3.6 Q4.1 0.3 4.3 0.8 L4.6 1.5 H8.9 Q9.5 1.5 9.5 2.1 V7.5 Q9.5 8.1 8.9 8.1 H0.9 Q0.3 8.1 0.3 7.5Z" fill="#26272b"/><path d="M0.3 2.45 H9.5" stroke="#7b7d82" stroke-width="0.35"/></svg>
<div class="a" style="left:151.6px;top:153px;font-size:4.7px;color:#2f6a94;">Delkurs 1</div>
<div class="a" style="left:268.2px;top:153px;font-size:4.7px;color:#2d3b45;">10.08</div>
<div class="a" style="left:320.3px;top:153px;font-size:4.7px;color:#2d3b45;">10.08</div>
<div class="a" style="left:483px;top:153px;font-size:4.7px;color:#8b949c;letter-spacing:0.07px;">--</div>
<svg class="a" style="left:602.8px;top:152.11px;" width="5" height="5" viewBox="0 0 5 5"><circle cx="2.5" cy="2.5" r="2.4" fill="#14834a"/><path d="M1.4 2.55 L2.2 3.35 L3.65 1.75" fill="none" stroke="#fff" stroke-width="0.65" stroke-linecap="round" stroke-linejoin="round"/></svg>
<svg class="a" style="left:655.6px;top:151.51px;" width="2" height="6" viewBox="0 0 2 6"><circle cx="1" cy="0.85" r="0.64" fill="#2d3640"/><circle cx="1" cy="3" r="0.64" fill="#2d3640"/><circle cx="1" cy="5.15" r="0.64" fill="#2d3640"/></svg>
<div class="a" style="left:106px;top:163.68px;width:579.6px;height:1px;background:#dcdddf;"></div>
<div class="a" style="left:109.9px;top:169.54px;width:8.2px;height:8.2px;background:#ffffff;border:1px solid #dadcdf;border-radius:1.6px;"></div>
<svg class="a" style="left:135.8px;top:168.84px;" width="9.8" height="8.4" viewBox="0 0 9.8 8.4"><path d="M0.3 0.9 Q0.3 0.3 0.9 0.3 H3.6 Q4.1 0.3 4.3 0.8 L4.6 1.5 H8.9 Q9.5 1.5 9.5 2.1 V7.5 Q9.5 8.1 8.9 8.1 H0.9 Q0.3 8.1 0.3 7.5Z" fill="#26272b"/><path d="M0.3 2.45 H9.5" stroke="#7b7d82" stroke-width="0.35"/></svg>
<div class="a" style="left:151.6px;top:172px;font-size:4.7px;color:#2f6a94;">Delkurs 2</div>
<div class="a" style="left:268.2px;top:172px;font-size:4.7px;color:#2d3b45;">10.13</div>
<div class="a" style="left:320.3px;top:172px;font-size:4.7px;color:#2d3b45;">10.13</div>
<div class="a" style="left:483px;top:172px;font-size:4.7px;color:#8b949c;letter-spacing:0.07px;">--</div>
<svg class="a" style="left:602.8px;top:171.44px;" width="5" height="5" viewBox="0 0 5 5"><circle cx="2.5" cy="2.5" r="2.4" fill="#14834a"/><path d="M1.4 2.55 L2.2 3.35 L3.65 1.75" fill="none" stroke="#fff" stroke-width="0.65" stroke-linecap="round" stroke-linejoin="round"/></svg>
<svg class="a" style="left:655.6px;top:170.84px;" width="2" height="6" viewBox="0 0 2 6"><circle cx="1" cy="0.85" r="0.64" fill="#2d3640"/><circle cx="1" cy="3" r="0.64" fill="#2d3640"/><circle cx="1" cy="5.15" r="0.64" fill="#2d3640"/></svg>
<div class="a" style="left:106px;top:183.01px;width:579.6px;height:1px;background:#dcdddf;"></div>
<div class="a" style="left:109.9px;top:188.87px;width:8.2px;height:8.2px;background:#ffffff;border:1px solid #dadcdf;border-radius:1.6px;"></div>
<svg class="a" style="left:135.8px;top:188.17px;" width="9.8" height="8.4" viewBox="0 0 9.8 8.4"><path d="M0.3 0.9 Q0.3 0.3 0.9 0.3 H3.6 Q4.1 0.3 4.3 0.8 L4.6 1.5 H8.9 Q9.5 1.5 9.5 2.1 V7.5 Q9.5 8.1 8.9 8.1 H0.9 Q0.3 8.1 0.3 7.5Z" fill="#26272b"/><path d="M0.3 2.45 H9.5" stroke="#7b7d82" stroke-width="0.35"/></svg>
<div class="a" style="left:151.6px;top:191px;font-size:4.7px;color:#2f6a94;">Delkurs 3</div>
<div class="a" style="left:268.2px;top:191px;font-size:4.7px;color:#2d3b45;">10.13</div>
<div class="a" style="left:320.3px;top:191px;font-size:4.7px;color:#2d3b45;">10.13</div>
<div class="a" style="left:483px;top:191px;font-size:4.7px;color:#8b949c;letter-spacing:0.07px;">--</div>
<svg class="a" style="left:602.8px;top:190.77px;" width="5" height="5" viewBox="0 0 5 5"><circle cx="2.5" cy="2.5" r="2.4" fill="#14834a"/><path d="M1.4 2.55 L2.2 3.35 L3.65 1.75" fill="none" stroke="#fff" stroke-width="0.65" stroke-linecap="round" stroke-linejoin="round"/></svg>
<svg class="a" style="left:655.6px;top:190.17px;" width="2" height="6" viewBox="0 0 2 6"><circle cx="1" cy="0.85" r="0.64" fill="#2d3640"/><circle cx="1" cy="3" r="0.64" fill="#2d3640"/><circle cx="1" cy="5.15" r="0.64" fill="#2d3640"/></svg>
<div class="a" style="left:106px;top:202.34px;width:579.6px;height:1px;background:#dcdddf;"></div>
<div class="a" style="left:109.9px;top:208.2px;width:8.2px;height:8.2px;background:#ffffff;border:1px solid #dadcdf;border-radius:1.6px;"></div>
<svg class="a" style="left:135.8px;top:207.5px;" width="9.8" height="8.4" viewBox="0 0 9.8 8.4"><path d="M0.3 0.9 Q0.3 0.3 0.9 0.3 H3.6 Q4.1 0.3 4.3 0.8 L4.6 1.5 H8.9 Q9.5 1.5 9.5 2.1 V7.5 Q9.5 8.1 8.9 8.1 H0.9 Q0.3 8.1 0.3 7.5Z" fill="#26272b"/><path d="M0.3 2.45 H9.5" stroke="#7b7d82" stroke-width="0.35"/></svg>
<div class="a" style="left:151.6px;top:211px;font-size:4.7px;color:#2f6a94;">Delkurs 4</div>
<div class="a" style="left:268.2px;top:211px;font-size:4.7px;color:#2d3b45;">10.13</div>
<div class="a" style="left:320.3px;top:211px;font-size:4.7px;color:#2d3b45;">10.13</div>
<div class="a" style="left:483px;top:211px;font-size:4.7px;color:#8b949c;letter-spacing:0.07px;">--</div>
<svg class="a" style="left:602.8px;top:210.1px;" width="5" height="5" viewBox="0 0 5 5"><circle cx="2.5" cy="2.5" r="2.4" fill="#14834a"/><path d="M1.4 2.55 L2.2 3.35 L3.65 1.75" fill="none" stroke="#fff" stroke-width="0.65" stroke-linecap="round" stroke-linejoin="round"/></svg>
<svg class="a" style="left:655.6px;top:209.5px;" width="2" height="6" viewBox="0 0 2 6"><circle cx="1" cy="0.85" r="0.64" fill="#2d3640"/><circle cx="1" cy="3" r="0.64" fill="#2d3640"/><circle cx="1" cy="5.15" r="0.64" fill="#2d3640"/></svg>
<div class="a" style="left:106px;top:221.67px;width:579.6px;height:1px;background:#dcdddf;"></div>
<div class="a" style="left:109.9px;top:227.53px;width:8.2px;height:8.2px;background:#ffffff;border:1px solid #dadcdf;border-radius:1.6px;"></div>
<svg class="a" style="left:135.8px;top:226.83px;" width="9.8" height="8.4" viewBox="0 0 9.8 8.4"><path d="M0.3 0.9 Q0.3 0.3 0.9 0.3 H3.6 Q4.1 0.3 4.3 0.8 L4.6 1.5 H8.9 Q9.5 1.5 9.5 2.1 V7.5 Q9.5 8.1 8.9 8.1 H0.9 Q0.3 8.1 0.3 7.5Z" fill="#26272b"/><path d="M0.3 2.45 H9.5" stroke="#7b7d82" stroke-width="0.35"/></svg>
<div class="a" style="left:151.6px;top:230px;font-size:4.7px;color:#2f6a94;">Quiz Files</div>
<div class="a" style="left:268.2px;top:230px;font-size:4.7px;color:#2d3b45;">22 okt 2025</div>
<div class="a" style="left:320.3px;top:230px;font-size:4.7px;color:#2d3b45;">22 okt 2025</div>
<div class="a" style="left:483px;top:230px;font-size:4.7px;color:#8b949c;letter-spacing:0.07px;">--</div>
<svg class="a" style="left:602.3px;top:229.83px;" width="6" height="4.4" viewBox="0 0 6 4.4"><path d="M0.4 2.2 Q3 -0.6 5.6 2.2 Q3 5 0.4 2.2Z" fill="none" stroke="#59626b" stroke-width="0.55"/><circle cx="3" cy="2.2" r="0.95" fill="none" stroke="#59626b" stroke-width="0.5"/><path d="M4.9 0.2 L1.1 4.2" stroke="#59626b" stroke-width="0.55"/></svg>
<svg class="a" style="left:655.6px;top:228.83px;" width="2" height="6" viewBox="0 0 2 6"><circle cx="1" cy="0.85" r="0.64" fill="#2d3640"/><circle cx="1" cy="3" r="0.64" fill="#2d3640"/><circle cx="1" cy="5.15" r="0.64" fill="#2d3640"/></svg>
<div class="a" style="left:106px;top:241px;width:579.6px;height:1px;background:#dcdddf;"></div>
<div class="a" style="left:109.9px;top:246.86px;width:8.2px;height:8.2px;background:#ffffff;border:1px solid #dadcdf;border-radius:1.6px;"></div>
<svg class="a" style="left:135.8px;top:246.16px;" width="9.8" height="8.4" viewBox="0 0 9.8 8.4"><path d="M0.3 0.9 Q0.3 0.3 0.9 0.3 H3.6 Q4.1 0.3 4.3 0.8 L4.6 1.5 H8.9 Q9.5 1.5 9.5 2.1 V7.5 Q9.5 8.1 8.9 8.1 H0.9 Q0.3 8.1 0.3 7.5Z" fill="#26272b"/><path d="M0.3 2.45 H9.5" stroke="#7b7d82" stroke-width="0.35"/></svg>
<div class="a" style="left:151.6px;top:249px;font-size:4.7px;color:#2f6a94;">template-images</div>
<div class="a" style="left:268.2px;top:249px;font-size:4.7px;color:#2d3b45;">29 okt 2021</div>
<div class="a" style="left:320.3px;top:249px;font-size:4.7px;color:#2d3b45;">16 mar 2024</div>
<div class="a" style="left:483px;top:249px;font-size:4.7px;color:#8b949c;letter-spacing:0.07px;">--</div>
<svg class="a" style="left:602.8px;top:248.76px;" width="5" height="5" viewBox="0 0 5 5"><circle cx="2.5" cy="2.5" r="2.4" fill="#14834a"/><path d="M1.4 2.55 L2.2 3.35 L3.65 1.75" fill="none" stroke="#fff" stroke-width="0.65" stroke-linecap="round" stroke-linejoin="round"/></svg>
<svg class="a" style="left:655.6px;top:248.16px;" width="2" height="6" viewBox="0 0 2 6"><circle cx="1" cy="0.85" r="0.64" fill="#2d3640"/><circle cx="1" cy="3" r="0.64" fill="#2d3640"/><circle cx="1" cy="5.15" r="0.64" fill="#2d3640"/></svg>
<div class="a" style="left:106px;top:260.33px;width:579.6px;height:1px;background:#dcdddf;"></div>
<div class="a" style="left:109.9px;top:266.19px;width:8.2px;height:8.2px;background:#ffffff;border:1px solid #dadcdf;border-radius:1.6px;"></div>
<svg class="a" style="left:135.8px;top:265.5px;" width="9.8" height="8.4" viewBox="0 0 9.8 8.4"><path d="M0.3 0.9 Q0.3 0.3 0.9 0.3 H3.6 Q4.1 0.3 4.3 0.8 L4.6 1.5 H8.9 Q9.5 1.5 9.5 2.1 V7.5 Q9.5 8.1 8.9 8.1 H0.9 Q0.3 8.1 0.3 7.5Z" fill="#26272b"/><path d="M0.3 2.45 H9.5" stroke="#7b7d82" stroke-width="0.35"/></svg>
<div class="a" style="left:151.6px;top:269px;font-size:4.7px;color:#2f6a94;">Uploaded Media</div>
<div class="a" style="left:268.2px;top:269px;font-size:4.7px;color:#2d3b45;">30 nov 2021</div>
<div class="a" style="left:320.3px;top:269px;font-size:4.7px;color:#2d3b45;">16 mar 2024</div>
<div class="a" style="left:483px;top:269px;font-size:4.7px;color:#8b949c;letter-spacing:0.07px;">--</div>
<svg class="a" style="left:602.3px;top:268.5px;" width="6" height="4.4" viewBox="0 0 6 4.4"><path d="M0.4 2.2 Q3 -0.6 5.6 2.2 Q3 5 0.4 2.2Z" fill="none" stroke="#59626b" stroke-width="0.55"/><circle cx="3" cy="2.2" r="0.95" fill="none" stroke="#59626b" stroke-width="0.5"/><path d="M4.9 0.2 L1.1 4.2" stroke="#59626b" stroke-width="0.55"/></svg>
<svg class="a" style="left:655.6px;top:267.5px;" width="2" height="6" viewBox="0 0 2 6"><circle cx="1" cy="0.85" r="0.64" fill="#2d3640"/><circle cx="1" cy="3" r="0.64" fill="#2d3640"/><circle cx="1" cy="5.15" r="0.64" fill="#2d3640"/></svg>
<div class="a" style="left:106px;top:279.66px;width:579.6px;height:1px;background:#dcdddf;"></div>
<div class="a" style="left:109.9px;top:285.52px;width:8.2px;height:8.2px;background:#ffffff;border:1px solid #dadcdf;border-radius:1.6px;"></div>
<svg class="a" style="left:135.8px;top:284.82px;" width="9.8" height="8.4" viewBox="0 0 9.8 8.4"><path d="M0.3 0.9 Q0.3 0.3 0.9 0.3 H3.6 Q4.1 0.3 4.3 0.8 L4.6 1.5 H8.9 Q9.5 1.5 9.5 2.1 V7.5 Q9.5 8.1 8.9 8.1 H0.9 Q0.3 8.1 0.3 7.5Z" fill="#26272b"/><path d="M0.3 2.45 H9.5" stroke="#7b7d82" stroke-width="0.35"/></svg>
<div class="a" style="left:151.6px;top:288px;font-size:4.7px;color:#2f6a94;">Uppladdade media</div>
<div class="a" style="left:268.2px;top:288px;font-size:4.7px;color:#2d3b45;">2 nov 2021</div>
<div class="a" style="left:320.3px;top:288px;font-size:4.7px;color:#2d3b45;">16 mar 2024</div>
<div class="a" style="left:483px;top:288px;font-size:4.7px;color:#8b949c;letter-spacing:0.07px;">--</div>
<svg class="a" style="left:602.3px;top:287.82px;" width="6" height="4.4" viewBox="0 0 6 4.4"><path d="M0.4 2.2 Q3 -0.6 5.6 2.2 Q3 5 0.4 2.2Z" fill="none" stroke="#59626b" stroke-width="0.55"/><circle cx="3" cy="2.2" r="0.95" fill="none" stroke="#59626b" stroke-width="0.5"/><path d="M4.9 0.2 L1.1 4.2" stroke="#59626b" stroke-width="0.55"/></svg>
<svg class="a" style="left:655.6px;top:286.82px;" width="2" height="6" viewBox="0 0 2 6"><circle cx="1" cy="0.85" r="0.64" fill="#2d3640"/><circle cx="1" cy="3" r="0.64" fill="#2d3640"/><circle cx="1" cy="5.15" r="0.64" fill="#2d3640"/></svg>
<div class="a" style="left:106px;top:298.99px;width:579.6px;height:1px;background:#dcdddf;"></div>
<div class="a" style="left:109.9px;top:304.85px;width:8.2px;height:8.2px;background:#ffffff;border:1px solid #dadcdf;border-radius:1.6px;"></div>
<svg class="a" style="left:136.35px;top:303.45px;" width="8.7" height="10" viewBox="0 0 8.7 10"><path d="M1.4 0.5 H5.6 L8.2 3.1 V8.6 Q8.2 9.5 7.3 9.5 H1.4 Q0.5 9.5 0.5 8.6 V1.4 Q0.5 0.5 1.4 0.5Z" fill="#fff" stroke="#34373c" stroke-width="0.6" stroke-linejoin="round"/><path d="M5.5 0.6 V3.2 H8.1" fill="none" stroke="#34373c" stroke-width="0.55"/><path d="M2.2 7.6 Q3.6 6.6 4.2 3.6 Q4.3 2.9 3.9 3 Q3.5 3.2 4 4.6 Q4.8 6.4 6.6 6.5 Q7.1 6.2 6.4 6.1 Q4 6 2.6 7.2 Q1.9 7.9 2.2 7.6Z" fill="none" stroke="#34373c" stroke-width="0.5" stroke-linejoin="round"/></svg>
<div class="a" style="left:151.6px;top:307px;font-size:4.7px;color:#2f6a94;">Bildkult, bildbruk, bildstorm 1-2.pdf</div>
<div class="a" style="left:268.2px;top:307px;font-size:4.7px;color:#2d3b45;">5 dec 2025</div>
<div class="a" style="left:320.3px;top:307px;font-size:4.7px;color:#2d3b45;">5 dec 2025</div>
<div class="a" style="left:483px;top:307px;font-size:4.7px;color:#2d3b45;">1,6 MB</div>
<svg class="a" style="left:551.9px;top:306.15px;" width="7.4" height="5" viewBox="0 0 7.4 5"><path d="M0.7 4.2 A3 3 0 0 1 6.7 4.2" fill="none" stroke="#7c9f3c" stroke-width="0.75" stroke-linecap="round"/><path d="M3.7 4 L4.9 2.9" stroke="#7c9f3c" stroke-width="0.6" stroke-linecap="round"/><circle cx="3.7" cy="4.1" r="0.6" fill="#7c9f3c"/></svg>
<svg class="a" style="left:602.8px;top:306.75px;" width="5" height="5" viewBox="0 0 5 5"><circle cx="2.5" cy="2.5" r="2.4" fill="#14834a"/><path d="M1.4 2.55 L2.2 3.35 L3.65 1.75" fill="none" stroke="#fff" stroke-width="0.65" stroke-linecap="round" stroke-linejoin="round"/></svg>
<svg class="a" style="left:655.6px;top:306.15px;" width="2" height="6" viewBox="0 0 2 6"><circle cx="1" cy="0.85" r="0.64" fill="#2d3640"/><circle cx="1" cy="3" r="0.64" fill="#2d3640"/><circle cx="1" cy="5.15" r="0.64" fill="#2d3640"/></svg>
<div class="a" style="left:106px;top:318.32px;width:579.6px;height:1px;background:#dcdddf;"></div>
<div class="a" style="left:109.9px;top:324.19px;width:8.2px;height:8.2px;background:#ffffff;border:1px solid #dadcdf;border-radius:1.6px;"></div>
<svg class="a" style="left:136.35px;top:322.79px;" width="8.7" height="10" viewBox="0 0 8.7 10"><path d="M1.4 0.5 H5.6 L8.2 3.1 V8.6 Q8.2 9.5 7.3 9.5 H1.4 Q0.5 9.5 0.5 8.6 V1.4 Q0.5 0.5 1.4 0.5Z" fill="#fff" stroke="#34373c" stroke-width="0.6" stroke-linejoin="round"/><path d="M5.5 0.6 V3.2 H8.1" fill="none" stroke="#34373c" stroke-width="0.55"/><path d="M2.2 7.6 Q3.6 6.6 4.2 3.6 Q4.3 2.9 3.9 3 Q3.5 3.2 4 4.6 Q4.8 6.4 6.6 6.5 Q7.1 6.2 6.4 6.1 Q4 6 2.6 7.2 Q1.9 7.9 2.2 7.6Z" fill="none" stroke="#34373c" stroke-width="0.5" stroke-linejoin="round"/></svg>
<div class="a" style="left:151.6px;top:327px;font-size:4.7px;color:#2f6a94;">Bildkult, bildbruk, bildstorm 2-1.pdf</div>
<div class="a" style="left:268.2px;top:327px;font-size:4.7px;color:#2d3b45;">5 dec 2025</div>
<div class="a" style="left:320.3px;top:327px;font-size:4.7px;color:#2d3b45;">5 dec 2025</div>
<div class="a" style="left:483px;top:327px;font-size:4.7px;color:#2d3b45;">794 KB</div>
<svg class="a" style="left:551.9px;top:325.49px;" width="7.4" height="5" viewBox="0 0 7.4 5"><path d="M0.7 4.2 A3 3 0 0 1 6.7 4.2" fill="none" stroke="#7c9f3c" stroke-width="0.75" stroke-linecap="round"/><path d="M3.7 4 L4.9 2.9" stroke="#7c9f3c" stroke-width="0.6" stroke-linecap="round"/><circle cx="3.7" cy="4.1" r="0.6" fill="#7c9f3c"/></svg>
<svg class="a" style="left:602.8px;top:326.08px;" width="5" height="5" viewBox="0 0 5 5"><circle cx="2.5" cy="2.5" r="2.4" fill="#14834a"/><path d="M1.4 2.55 L2.2 3.35 L3.65 1.75" fill="none" stroke="#fff" stroke-width="0.65" stroke-linecap="round" stroke-linejoin="round"/></svg>
<svg class="a" style="left:655.6px;top:325.49px;" width="2" height="6" viewBox="0 0 2 6"><circle cx="1" cy="0.85" r="0.64" fill="#2d3640"/><circle cx="1" cy="3" r="0.64" fill="#2d3640"/><circle cx="1" cy="5.15" r="0.64" fill="#2d3640"/></svg>
<div class="a" style="left:106px;top:337.65px;width:579.6px;height:1px;background:#dcdddf;"></div>
<div class="a" style="left:109.9px;top:343.51px;width:8.2px;height:8.2px;background:#ffffff;border:1px solid #dadcdf;border-radius:1.6px;"></div>
<svg class="a" style="left:136.35px;top:342.11px;" width="8.7" height="10" viewBox="0 0 8.7 10"><path d="M1.4 0.5 H5.6 L8.2 3.1 V8.6 Q8.2 9.5 7.3 9.5 H1.4 Q0.5 9.5 0.5 8.6 V1.4 Q0.5 0.5 1.4 0.5Z" fill="#fff" stroke="#34373c" stroke-width="0.6" stroke-linejoin="round"/><path d="M5.5 0.6 V3.2 H8.1" fill="none" stroke="#34373c" stroke-width="0.55"/><path d="M2.2 7.6 Q3.6 6.6 4.2 3.6 Q4.3 2.9 3.9 3 Q3.5 3.2 4 4.6 Q4.8 6.4 6.6 6.5 Q7.1 6.2 6.4 6.1 Q4 6 2.6 7.2 Q1.9 7.9 2.2 7.6Z" fill="none" stroke="#34373c" stroke-width="0.5" stroke-linejoin="round"/></svg>
<div class="a" style="left:151.6px;top:346px;font-size:4.7px;color:#2f6a94;">Bildkult, bildbruk, bildstorm 7-1.pdf</div>
<div class="a" style="left:268.2px;top:346px;font-size:4.7px;color:#2d3b45;">5 dec 2025</div>
<div class="a" style="left:320.3px;top:346px;font-size:4.7px;color:#2d3b45;">5 dec 2025</div>
<div class="a" style="left:483px;top:346px;font-size:4.7px;color:#2d3b45;">1,5 MB</div>
<svg class="a" style="left:551.9px;top:344.81px;" width="7.4" height="5" viewBox="0 0 7.4 5"><path d="M0.7 4.2 A3 3 0 0 1 6.7 4.2" fill="none" stroke="#7c9f3c" stroke-width="0.75" stroke-linecap="round"/><path d="M3.7 4 L4.9 2.9" stroke="#7c9f3c" stroke-width="0.6" stroke-linecap="round"/><circle cx="3.7" cy="4.1" r="0.6" fill="#7c9f3c"/></svg>
<svg class="a" style="left:602.8px;top:345.41px;" width="5" height="5" viewBox="0 0 5 5"><circle cx="2.5" cy="2.5" r="2.4" fill="#14834a"/><path d="M1.4 2.55 L2.2 3.35 L3.65 1.75" fill="none" stroke="#fff" stroke-width="0.65" stroke-linecap="round" stroke-linejoin="round"/></svg>
<svg class="a" style="left:655.6px;top:344.81px;" width="2" height="6" viewBox="0 0 2 6"><circle cx="1" cy="0.85" r="0.64" fill="#2d3640"/><circle cx="1" cy="3" r="0.64" fill="#2d3640"/><circle cx="1" cy="5.15" r="0.64" fill="#2d3640"/></svg>
<div class="a" style="left:106px;top:356.98px;width:579.6px;height:1px;background:#dcdddf;"></div>
<div class="a" style="left:109.9px;top:362.84px;width:8.2px;height:8.2px;background:#ffffff;border:1px solid #dadcdf;border-radius:1.6px;"></div>
<svg class="a" style="left:136.35px;top:361.44px;" width="8.7" height="10" viewBox="0 0 8.7 10"><path d="M1.4 0.5 H5.6 L8.2 3.1 V8.6 Q8.2 9.5 7.3 9.5 H1.4 Q0.5 9.5 0.5 8.6 V1.4 Q0.5 0.5 1.4 0.5Z" fill="#fff" stroke="#34373c" stroke-width="0.6" stroke-linejoin="round"/><path d="M5.5 0.6 V3.2 H8.1" fill="none" stroke="#34373c" stroke-width="0.55"/><path d="M2.2 7.6 Q3.6 6.6 4.2 3.6 Q4.3 2.9 3.9 3 Q3.5 3.2 4 4.6 Q4.8 6.4 6.6 6.5 Q7.1 6.2 6.4 6.1 Q4 6 2.6 7.2 Q1.9 7.9 2.2 7.6Z" fill="none" stroke="#34373c" stroke-width="0.5" stroke-linejoin="round"/></svg>
<div class="a" style="left:151.6px;top:365px;font-size:4.7px;color:#2f6a94;">Bildkult, bildbruk, bildstorm 8-1.pdf</div>
<div class="a" style="left:268.2px;top:365px;font-size:4.7px;color:#2d3b45;">5 dec 2025</div>
<div class="a" style="left:320.3px;top:365px;font-size:4.7px;color:#2d3b45;">5 dec 2025</div>
<div class="a" style="left:483px;top:365px;font-size:4.7px;color:#2d3b45;">1,5 MB</div>
<svg class="a" style="left:551.9px;top:364.14px;" width="7.4" height="5" viewBox="0 0 7.4 5"><path d="M0.7 4.2 A3 3 0 0 1 6.7 4.2" fill="none" stroke="#7c9f3c" stroke-width="0.75" stroke-linecap="round"/><path d="M3.7 4 L4.9 2.9" stroke="#7c9f3c" stroke-width="0.6" stroke-linecap="round"/><circle cx="3.7" cy="4.1" r="0.6" fill="#7c9f3c"/></svg>
<svg class="a" style="left:602.8px;top:364.74px;" width="5" height="5" viewBox="0 0 5 5"><circle cx="2.5" cy="2.5" r="2.4" fill="#14834a"/><path d="M1.4 2.55 L2.2 3.35 L3.65 1.75" fill="none" stroke="#fff" stroke-width="0.65" stroke-linecap="round" stroke-linejoin="round"/></svg>
<svg class="a" style="left:655.6px;top:364.14px;" width="2" height="6" viewBox="0 0 2 6"><circle cx="1" cy="0.85" r="0.64" fill="#2d3640"/><circle cx="1" cy="3" r="0.64" fill="#2d3640"/><circle cx="1" cy="5.15" r="0.64" fill="#2d3640"/></svg>
<div class="a" style="left:106px;top:376.31px;width:579.6px;height:1px;background:#dcdddf;"></div>
<div class="a" style="left:137.4px;top:379.7px;width:6.2px;height:1.1px;background:#6a6d72;"></div>
<div class="a" style="left:699.4px;top:44.6px;width:6.2px;height:336.2px;background:#ffffff;"></div>
<svg class="a" style="left:700.9px;top:46.4px;" width="3" height="2.4" viewBox="0 0 3 2.4"><path d="M1.5 0.3 L2.8 2.1 H0.2Z" fill="#55585e"/></svg>
<svg class="a" style="left:700.9px;top:376.4px;" width="3" height="2.4" viewBox="0 0 3 2.4"><path d="M1.5 2.1 L2.8 0.3 H0.2Z" fill="#55585e"/></svg>
<div class="a" style="left:701px;top:72px;width:2.8px;height:181.8px;background:#8b8c90;border-radius:1.4px;"></div>
<div class="a" style="left:705.6px;top:0px;width:4.4px;height:381px;background:#f2f2f5;"></div>
<div class="a" style="left:705.6px;top:0px;width:4.4px;height:14.6px;background:#e4e6ee;"></div>
<div class="a" style="left:705.6px;top:29.6px;width:4.4px;height:0.6px;background:#e4e4ea;"></div>
<div class="a" style="left:705.2px;top:0px;width:1px;height:381px;background:linear-gradient(90deg,rgba(120,120,135,0.16),rgba(120,120,135,0));"></div>
<!-- task -->
<div class="a" style="left:0px;top:380.8px;width:710px;height:19.2px;background:#eeeeef;"></div>
<div class="a" style="left:0px;top:380.8px;width:710px;height:0.6px;background:#dcdcdf;"></div>
<div class="a" style="left:17.5px;top:380.6px;width:34.5px;height:1.4px;background:#2d2e34;border-radius:0 0 1px 1px;"></div>
<svg class="a" style="left:6.1px;top:388px;" width="9.6" height="6.6" viewBox="0.2 0.6 7.6 5.2"><path d="M1.8 5.4 A1.6 1.6 0 0 1 2 2.3 A2.3 2.3 0 0 1 6.3 2.7 A1.4 1.4 0 0 1 6.4 5.4Z" fill="#bccdea"/></svg>
<svg class="a" style="left:10.5px;top:383.9px;" width="6" height="6" viewBox="0 0 6 6"><circle cx="3" cy="3" r="2.85" fill="#c8202c"/><text x="3" y="4.1" font-size="3.2" font-weight="bold" fill="#fff" text-anchor="middle" font-family="Liberation Sans, sans-serif">1</text></svg>
<div class="a" style="left:18.2px;top:387px;font-size:4.5px;color:#2b2b2b;letter-spacing:-0.55px;">-1°C</div>
<div class="a" style="left:18.2px;top:393px;font-size:4.5px;color:#6a6a6a;letter-spacing:0.12px;">Molnigt</div>
<svg class="a" style="left:154.2px;top:386.6px;" width="8.8" height="8.8" viewBox="0 0 8.8 8.8"><rect x="0.3" y="0.3" width="3.9" height="3.9" rx="0.3" fill="#1f8fe6"/><rect x="4.6" y="0.3" width="3.9" height="3.9" rx="0.3" fill="#2aa3f0"/><rect x="0.3" y="4.6" width="3.9" height="3.9" rx="0.3" fill="#1a7fd6"/><rect x="4.6" y="4.6" width="3.9" height="3.9" rx="0.3" fill="#1f8fe6"/></svg>
<div class="a" style="left:166.6px;top:385.2px;width:82.8px;height:11.4px;background:#f9f9fb;border-radius:5.7px;border:0.3px solid #e4e4e8;"></div>
<svg class="a" style="left:172.3px;top:388.5px;" width="5" height="5" viewBox="0 0 5 5"><circle cx="2.1" cy="2.1" r="1.5" fill="none" stroke="#2b2b2b" stroke-width="0.6"/><path d="M3.2 3.2 L4.6 4.6" stroke="#2b2b2b" stroke-width="0.65" stroke-linecap="round"/></svg>
<div class="a" style="left:181.4px;top:390px;font-size:4.6px;color:#5d5d5d;letter-spacing:-0.06px;">Sök</div>
<svg class="a" style="left:253.5px;top:388.6px;" width="7" height="6" viewBox="0 0 7 6"><rect x="0.4" y="0.5" width="3.6" height="4.4" fill="#f4f4f4" stroke="#8a8a8a" stroke-width="0.35"/><rect x="1.3" y="1.9" width="5.2" height="3.6" rx="0.3" fill="#1f1f1f"/></svg>
<svg class="a" style="left:269.9px;top:386.5px;" width="8.6" height="8.6" viewBox="0 0 8.6 8.6"><circle cx="4.3" cy="4.3" r="4.1" fill="#e33b2e"/><path d="M4.3 4.3 L0.75 2.25 A4.1 4.1 0 0 0 4.3 8.4 L6.3 5.2Z" fill="#2da44e"/><path d="M4.3 4.3 L7.85 2.25 A4.1 4.1 0 0 1 4.3 8.4 L6.3 5.2Z" fill="#fbc116"/><path d="M0.75 2.25 A4.1 4.1 0 0 1 7.85 2.25 L4.3 2.4Z" fill="#e33b2e"/><circle cx="4.3" cy="4.3" r="1.9" fill="#fff"/><circle cx="4.3" cy="4.3" r="1.5" fill="#3b82f0"/></svg>
<div class="a" style="left:273.4px;top:398px;width:1.6px;height:0.7px;background:#7d7d80;border-radius:0.4px;"></div>
<svg class="a" style="left:286.5px;top:387.3px;" width="9" height="7.4" viewBox="0 0 9 7.4"><path d="M0.4 0.8 H3.4 L4.2 1.6 H8.6 V7 H0.4Z" fill="#f5b921"/><rect x="0.4" y="2.6" width="8.2" height="4.4" fill="#fbd64b"/><rect x="2.4" y="5" width="4.2" height="1.2" fill="#3f8fd9"/></svg>
<svg class="a" style="left:303.5px;top:386.3px;" width="9" height="9" viewBox="0 0 9 9"><path d="M1 3 Q1 1 3 1 H5 Q4 3 4.5 4.5 Q3 4.5 1 3Z" fill="#2f7de0"/><path d="M5 1 H6.5 Q8.3 1 8.2 3 Q8 5 6.5 5.5 Q5 4 5 1Z" fill="#c04bd8"/><path d="M1 3.4 Q2 6.5 4.4 6.8 Q5 5.4 4.5 4.6Z" fill="#25b6a6"/><path d="M4.6 4.8 Q6 5.8 8 4 Q8.2 7.5 5.2 7.8 Q3.6 7.8 4.4 6.8Z" fill="#f29b38"/><rect x="3.2" y="6.2" width="4.2" height="2.3" rx="0.3" fill="#3a3a3a"/></svg>
<svg class="a" style="left:318.9px;top:386.3px;" width="9" height="9" viewBox="0 0 9 9"><circle cx="4.5" cy="4.5" r="4.2" fill="#1b74c9"/><path d="M0.5 5 A4.2 4.2 0 0 1 8.7 4 Q8.6 5.6 6.6 5.6 H3.6 Q3.8 7.6 6.6 7.8 A4.2 4.2 0 0 1 0.5 5Z" fill="#35c1d4"/><path d="M3.4 5 Q3.6 3.2 5.2 3.2 Q6.4 3.4 6.4 4.6 Q6.2 5.4 5.4 5.4Z" fill="#eaf6fb"/><path d="M4.5 8.7 A4.2 4.2 0 0 0 8 6.6 Q6 8 4 7 Q3 6.2 3.4 5 Q2.2 7.6 4.5 8.7Z" fill="#4bd15f"/></svg>
<div class="a" style="left:322.6px;top:398px;width:1.6px;height:0.7px;background:#7d7d80;border-radius:0.4px;"></div>
<svg class="a" style="left:334.5px;top:386.5px;" width="9.4" height="8.6" viewBox="0 0 9.4 8.6"><circle cx="5.2" cy="4.3" r="4" fill="#e8553a"/><path d="M5.2 0.3 A4 4 0 0 1 9.2 4.3 H5.2Z" fill="#f58a6a"/><rect x="0.3" y="2" width="4.6" height="4.6" rx="0.5" fill="#c43521"/><text x="2.6" y="5.5" font-size="3.6" font-weight="bold" fill="#fff" text-anchor="middle" font-family="Liberation Sans, sans-serif">P</text></svg>
<svg class="a" style="left:351.7px;top:386.5px;" width="8.6" height="8.6" viewBox="0 0 8.6 8.6"><circle cx="4.3" cy="4.3" r="3" fill="none" stroke="#54657e" stroke-width="1.7" stroke-dasharray="1.35 1"/><circle cx="4.3" cy="4.3" r="2.5" fill="#6b8ab5"/><circle cx="4.3" cy="4.3" r="1.1" fill="#e9edf4"/></svg>
<svg class="a" style="left:367.3px;top:386.5px;" width="9.4" height="8.6" viewBox="0 0 9.4 8.6"><rect x="3" y="0.8" width="6" height="7" rx="0.6" fill="#2a8be0"/><rect x="5.6" y="3" width="3.4" height="2.6" fill="#7cc4f5"/><rect x="0.3" y="2" width="4.8" height="4.8" rx="0.5" fill="#0f65b9"/><text x="2.7" y="5.7" font-size="3.6" font-weight="bold" fill="#fff" text-anchor="middle" font-family="Liberation Sans, sans-serif">O</text></svg>
<div class="a" style="left:371.2px;top:398px;width:1.6px;height:0.7px;background:#7d7d80;border-radius:0.4px;"></div>
<svg class="a" style="left:383.3px;top:386.5px;" width="9.4" height="8.6" viewBox="0 0 9.4 8.6"><rect x="3" y="0.8" width="6" height="7" rx="0.6" fill="#2fa464"/><rect x="6" y="0.8" width="3" height="3.5" fill="#48c787"/><rect x="0.3" y="2" width="4.8" height="4.8" rx="0.5" fill="#14733f"/><text x="2.7" y="5.7" font-size="3.6" font-weight="bold" fill="#fff" text-anchor="middle" font-family="Liberation Sans, sans-serif">X</text></svg>
<svg class="a" style="left:399.9px;top:387px;" width="9" height="8" viewBox="0 0 9 8"><path d="M0.6 3.4 L4.4 1.6 L8.4 2.8 L8 6.2 L3.8 7.4 L0.8 6Z" fill="#2d79d6"/><path d="M0.6 3.4 L4.4 1.6 L8.4 2.8 L4.4 4.6Z" fill="#7ab8f2"/><path d="M3 1 L6 0.6 L6.6 2.2 L4 2.8Z" fill="#1a4f9e"/></svg>
<svg class="a" style="left:416.2px;top:386.2px;" width="8.8" height="8.8" viewBox="0 0 8.8 8.8"><circle cx="4.4" cy="4.5" r="4" fill="#f4642a"/><path d="M1 2.4 Q4.4 -0.6 7.8 2.4 Q8.6 4 8 5.6 Q6 2.4 1 2.4Z" fill="#fcb92b"/><circle cx="4.6" cy="4.6" r="2.1" fill="#7a3fd1"/><path d="M2.2 4 Q3.4 3 4.8 3.6 Q3.4 4.2 3.6 5.6 Q2.4 5.4 2.2 4Z" fill="#f4642a"/></svg>
<div class="a" style="left:419.8px;top:398px;width:1.6px;height:0.7px;background:#7d7d80;border-radius:0.4px;"></div>
<svg class="a" style="left:432.3px;top:386.5px;" width="9.4" height="8.6" viewBox="0 0 9.4 8.6"><rect x="3" y="0.8" width="6" height="7" rx="0.6" fill="#3b8ee6"/><rect x="3" y="4.3" width="6" height="3.5" fill="#1f5fbf"/><rect x="0.3" y="2" width="4.8" height="4.8" rx="0.5" fill="#1a56b0"/><text x="2.7" y="5.7" font-size="3.4" font-weight="bold" fill="#fff" text-anchor="middle" font-family="Liberation Sans, sans-serif">W</text></svg>
<svg class="a" style="left:450.4px;top:386.5px;" width="6.4" height="8.6" viewBox="0 0 6.4 8.6"><rect x="0.4" y="0.3" width="5.6" height="8" rx="0.6" fill="#3db5c9"/><rect x="1.2" y="1.6" width="4" height="4.6" fill="#bfe9f0"/><rect x="1.2" y="6.8" width="4" height="0.8" fill="#1d7d90"/></svg>
<svg class="a" style="left:465.6px;top:387.2px;" width="8.8" height="7.6" viewBox="0 0 8.8 7.6"><rect x="0.4" y="2.6" width="8" height="4.6" rx="0.5" fill="#8a2be2"/><path d="M0.4 2.4 L7.8 0.4 L8.2 1.8 L0.8 3.6Z" fill="#b45cf0"/><rect x="0.4" y="5.4" width="8" height="1.8" fill="#5b16a8"/></svg>
<div class="a" style="left:478.6px;top:383.4px;width:16px;height:15.2px;background:#fafafc;border-radius:1.6px;border:0.3px solid #e2e2e6;"></div>
<svg class="a" style="left:482.2px;top:387px;" width="8.4" height="8" viewBox="0 0 8.4 8"><circle cx="3.6" cy="4.6" r="1.6" fill="none" stroke="#c8323c" stroke-width="0.9"/><path d="M1 1.6 L3 3.4 M1 7.4 L2.6 6 M5 4 L6.4 2.6" stroke="#6a6a72" stroke-width="0.6"/><circle cx="6.6" cy="1.8" r="1.5" fill="#d42a36"/></svg>
<div class="a" style="left:484.2px;top:397.9px;width:4.6px;height:0.8px;background:#2f7fd8;border-radius:0.4px;"></div>
<svg class="a" style="left:498.6px;top:387px;" width="8" height="8" viewBox="0 0 8 8"><rect x="0.3" y="0.3" width="7.4" height="7.4" rx="0.9" fill="#d83a3a"/><path d="M3 6.4 V2.4 H4.6 Q6 2.4 6 3.7 Q6 5 4.6 5 H3" fill="none" stroke="#fff" stroke-width="0.8"/></svg>
<svg class="a" style="left:514.8px;top:386.8px;" width="8.4" height="8.4" viewBox="0 0 8.4 8.4"><circle cx="4.2" cy="4.2" r="4" fill="#2d6fe0"/><text x="4.2" y="5.3" font-size="3" font-weight="bold" fill="#fff" text-anchor="middle" font-family="Liberation Sans, sans-serif">zm</text></svg>
<svg class="a" style="left:529.9px;top:386.8px;" width="9" height="8.4" viewBox="0 0 9 8.4"><circle cx="6.4" cy="2" r="1.3" fill="#5059c9"/><rect x="5" y="3.4" width="3.6" height="3.6" rx="0.8" fill="#5059c9"/><circle cx="3.6" cy="1.7" r="1.5" fill="#7b83eb"/><rect x="0.6" y="3.2" width="5.2" height="4.6" rx="0.6" fill="#4b53bc"/><text x="3.2" y="6.8" font-size="3.4" font-weight="bold" fill="#fff" text-anchor="middle" font-family="Liberation Sans, sans-serif">T</text></svg>
<svg class="a" style="left:546.9px;top:386.9px;" width="8.2" height="8.2" viewBox="0 0 8.2 8.2"><rect x="0.3" y="0.3" width="7.6" height="7.6" rx="1" fill="#22b14c"/><path d="M5.8 2.6 H3 V5.6 H5.8" fill="none" stroke="#fff" stroke-width="1"/></svg>
<svg class="a" style="left:615.3px;top:389.5px;" width="4.4" height="3" viewBox="0 0 4.4 3"><path d="M0.6 2.3 L2.2 0.7 L3.8 2.3" fill="none" stroke="#33343a" stroke-width="0.55" stroke-linecap="round" stroke-linejoin="round"/></svg>
<svg class="a" style="left:625.9px;top:389px;" width="6.6" height="4.4" viewBox="0 0 6.6 4.4"><path d="M1.6 4 A1.3 1.3 0 0 1 1.8 1.5 A1.8 1.8 0 0 1 5 1.7 A1.2 1.2 0 0 1 5.2 4Z" fill="#2b86e0"/></svg>
<svg class="a" style="left:639px;top:388px;" width="4" height="6" viewBox="0 0 4 6"><rect x="1.3" y="0.4" width="1.4" height="3" rx="0.7" fill="#4a7fd0"/><path d="M0.6 2.6 Q0.6 4.2 2 4.2 Q3.4 4.2 3.4 2.6 M2 4.2 V5.5" fill="none" stroke="#4a7fd0" stroke-width="0.45"/></svg>
<svg class="a" style="left:649.4px;top:388.2px;" width="6.4" height="5.6" viewBox="0 0 6.4 5.6"><rect x="0.5" y="0.6" width="4.6" height="3.4" rx="0.4" fill="none" stroke="#33343a" stroke-width="0.55"/><path d="M1.8 5 H3.8" stroke="#33343a" stroke-width="0.5"/><rect x="4.2" y="2.4" width="1.8" height="2.8" rx="0.3" fill="#eeeeef" stroke="#33343a" stroke-width="0.45"/></svg>
<svg class="a" style="left:659.5px;top:388.7px;" width="5" height="4.6" viewBox="0 0 5 4.6"><path d="M0.5 1.7 H1.5 L2.7 0.6 V4 L1.5 2.9 H0.5Z" fill="none" stroke="#33343a" stroke-width="0.45" stroke-linejoin="round"/><path d="M3.4 1.4 Q4 2.3 3.4 3.2 M4 0.8 Q5 2.3 4 3.8" fill="none" stroke="#33343a" stroke-width="0.4"/></svg>
<svg class="a" style="left:668.4px;top:388.7px;" width="5.6" height="4.6" viewBox="0 0 5.6 4.6"><rect x="0.4" y="0.6" width="3" height="2.4" fill="#33343a"/><rect x="2.6" y="1.8" width="2.6" height="2.4" fill="#33343a"/></svg>
<div class="a" style="left:692.8px;top:387px;font-size:4.5px;color:#1f1f1f;letter-spacing:-0.09px;">10:14</div>
<div class="a" style="left:680.5px;top:393px;font-size:4.5px;color:#1f1f1f;letter-spacing:0.02px;">2025-12-22</div>
</div></body></html>
